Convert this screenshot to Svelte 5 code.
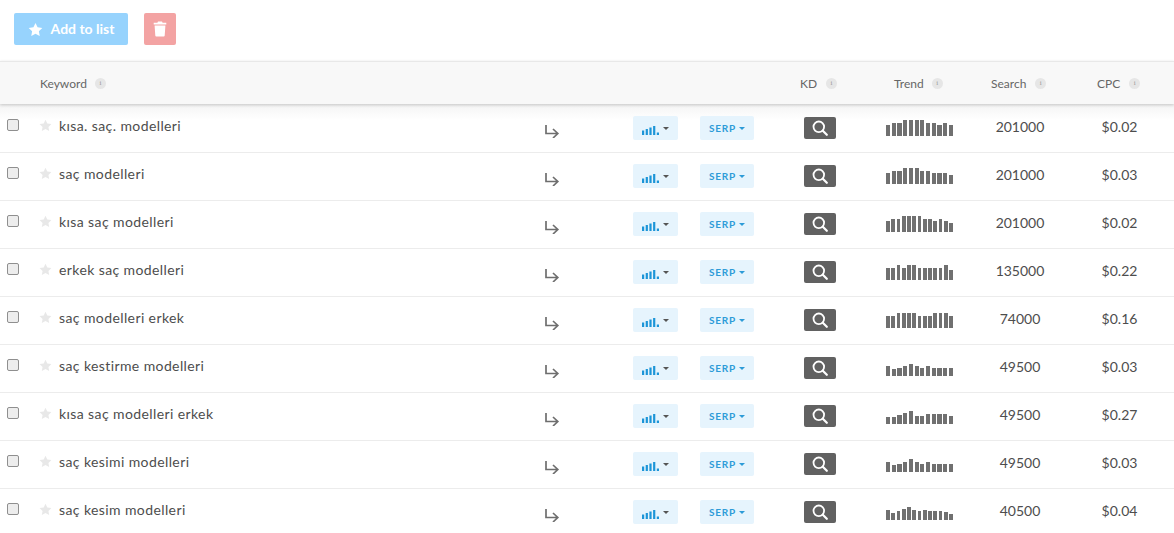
<script>
  const rows = [
    { k: 'kısa. saç. modelleri', t: [11,13,13,16,16,16,16,13,13,11,13,11], s: '201000', c: '$0.02' },
    { k: 'saç modelleri', t: [11,13,13,16,16,16,13,13,11,11,11,9], s: '201000', c: '$0.03' },
    { k: 'kısa saç modelleri', t: [11,13,13,16,16,16,16,13,13,11,13,11,9], s: '201000', c: '$0.02' },
    { k: 'erkek saç modelleri', t: [12,12,15,12,15,15,12,12,12,12,12,15,10], s: '135000', c: '$0.22' },
    { k: 'saç modelleri erkek', t: [12,12,15,15,15,15,12,12,12,15,15,15,12], s: '74000', c: '$0.16' },
    { k: 'saç kestirme modelleri', t: [10,7,8,10,12,10,8,10,8,8,8,8], s: '49500', c: '$0.03' },
    { k: 'kısa saç modelleri erkek', t: [7,7,9,11,13,8,8,10,10,10,10,8], s: '49500', c: '$0.27' },
    { k: 'saç kesimi modelleri', t: [10,7,8,10,13,10,8,10,8,8,8,8], s: '49500', c: '$0.03' },
    { k: 'saç kesim modelleri', t: [10,7,9,11,13,10,9,10,9,9,9,8,6], s: '40500', c: '$0.04' }
  ];
  const heads = [
    { l: 'KD', cls: 'h-kd' }, { l: 'Trend', cls: 'h-trend' }, { l: 'Search', cls: 'h-search' }, { l: 'CPC', cls: 'h-cpc' }
  ];
</script>

{#snippet info()}
  <span class="info">i</span>
{/snippet}

{#snippet star(cls)}
  <svg class={cls} viewBox="0 0 24 24"><path d="M12 1.500l3.300 6.900 7.600 1-5.500 5.300 1.400 7.500L12 18.600l-6.800 3.600 1.400-7.500L1.100 9.400l7.600-1z" fill="currentColor"/></svg>
{/snippet}

<div class="page">
  <div class="toolbar">
    <button class="add">{@render star('add-star')}<span class="add-label">Add to list</span></button>
    <button class="del" aria-label="Delete">
      <svg viewBox="0 0 14 16" width="14" height="16"><path d="M5 0.500h4l.6 1.300H13.300v1.700H.7V1.800h3.700zM1.600 4.500h10.800l-.7 10a1 1 0 0 1-1 1H3.300a1 1 0 0 1-1-1z" fill="#fff"/></svg>
    </button>
  </div>

  <div class="head">
    <div class="h-key">Keyword{@render info()}</div>
    {#each heads as h}
      <div class={h.cls}>{h.l}{@render info()}</div>
    {/each}
  </div>

  <div class="rows">
    {#each rows as r}
      <div class="row">
        <input class="box" type="checkbox" />
        {@render star('row-star')}
        <span class="kw">{r.k}</span>
        <svg class="arrow" viewBox="0 0 16 14" width="16" height="14"><path d="M1 1v8.500h11.500M8 5l4.800 4.500L8 14" fill="none" stroke="#6e6e6e" stroke-width="1.700"/></svg>
        <span class="chip chart">
          <svg class="bars" viewBox="0 0 18 9" width="18" height="9"><path d="M0 4.500h2.200V9H0zM3.700 3h2.200v6H3.700zM7.400 1.500h2.200V9H7.400zM11.100 0h2.200v9h-2.200zM14.800 6.500H17V9h-2.200z" fill="#1c95d8"/></svg>
          <i class="caret"></i>
        </span>
        <span class="chip serp">SERP<i class="caret"></i></span>
        <span class="kd">
          <svg viewBox="0 0 16 16" width="16" height="16"><circle cx="6.800" cy="6.800" r="5.300" fill="none" stroke="#fff" stroke-width="1.800"/><path d="M10.800 10.800l4 4" stroke="#fff" stroke-width="2.200" stroke-linecap="round"/></svg>
        </span>
        <span class="trend">
          {#each r.t as b}<i style="height:{b}px"></i>{/each}
        </span>
        <span class="num">{r.s}</span>
        <span class="cpc">{r.c}</span>
      </div>
    {/each}
  </div>
</div>

<style>
  :global(body) { margin: 0; background: #fff; }
  .page { width: 1174px; height: 533px; overflow: hidden; font-family: Lato, "Open Sans", sans-serif; color: #444; }
  .toolbar { height: 61px; display: flex; align-items: flex-start; box-sizing: border-box; padding: 13px 0 0 14px; gap: 16px; }
  button { border: 0; padding: 0; margin: 0; height: 32px; border-radius: 2px; color: #fff; font-family: inherit; display: flex; align-items: center; justify-content: center; }
  .add { width: 114px; background: #97d3fd; font-size: 14px; font-weight: 700; gap: 8px; }
  .add-label { margin-bottom: 2px; }
  .add-star { width: 15px; height: 15px; color: #fff; }
  .del { width: 32px; background: #f3a3a3; }
  .head { height: 43px; box-sizing: border-box; background: #f8f8f8; border-top: 1px solid #e8e8e8; box-shadow: 0 1px 3px rgba(0,0,0,.2); position: relative; z-index: 1; display: grid; grid-template-columns: 794px 94px 97px 106px 83px; align-items: center; font-size: 12px; color: #666; }
  .head > div { display: flex; align-items: center; }
  .h-key { padding-left: 40px; }
  .h-kd { padding-left: 6px; }
  .h-trend { padding-left: 6px; }
  .h-search { padding-left: 6px; }
  .h-cpc { padding-left: 6px; }
  .h-kd .info { margin-left: 9px; }
  .h-search .info, .h-cpc .info { margin-left: 9px; }
  .info { width: 11px; height: 11px; border-radius: 50%; background: #e6e6e6; color: #999; font-size: 7px; line-height: 11px; text-align: center; margin-left: 8px; font-family: "Liberation Serif", serif; }
  .rows { padding-top: 1px; background: linear-gradient(#f4f4f4, #fff 16px) no-repeat; }
  .row { height: 48px; box-sizing: border-box; padding-bottom: 1px; border-bottom: 1px solid #ececec; display: grid; grid-template-columns: 39px 20px 486px 88px 67px 104px 82px 104px 60px 124px; align-items: center; }
  .box { appearance: none; width: 12px; height: 12px; margin: 0 0 7px 7px; box-sizing: border-box; border: 1px solid #8f8f8f; border-radius: 2px; background: #ededed; }
  .row-star { width: 13px; height: 13px; color: #e8e8e8; margin: 0 0 5px 0; }
  .kw { font-size: 14px; letter-spacing: .4px; color: #4d4d4d; margin-bottom: 5px; white-space: nowrap; }
  .arrow { margin-top: 6px; }
  .chip { height: 24px; background: #e6f4fd; border-radius: 2px; display: flex; align-items: center; justify-content: center; color: #2d9bd8; }
  .chart { width: 45px; gap: 3px; }
  .bars { margin-top: 5px; }
  .serp { width: 54px; font-size: 10px; font-weight: 700; letter-spacing: .8px; gap: 3px; }
  .caret { width: 0; height: 0; border-left: 3px solid transparent; border-right: 3px solid transparent; border-top: 3px solid currentColor; }
  .chart .caret { color: #555; }
  .kd { width: 32px; height: 22px; background: #616161; border-radius: 2px; display: flex; align-items: center; justify-content: center; }
  .trend { display: flex; align-items: flex-end; gap: 1.500px; width: 67px; height: 16px; }
  .trend i { flex: 1; background: #707070; display: block; }
  .num { font-size: 14px; color: #4d4d4d; text-align: center; margin-bottom: 4px; }
  .cpc { font-size: 14px; color: #4d4d4d; text-align: center; padding-left: 15px; margin-bottom: 4px; }
</style>
